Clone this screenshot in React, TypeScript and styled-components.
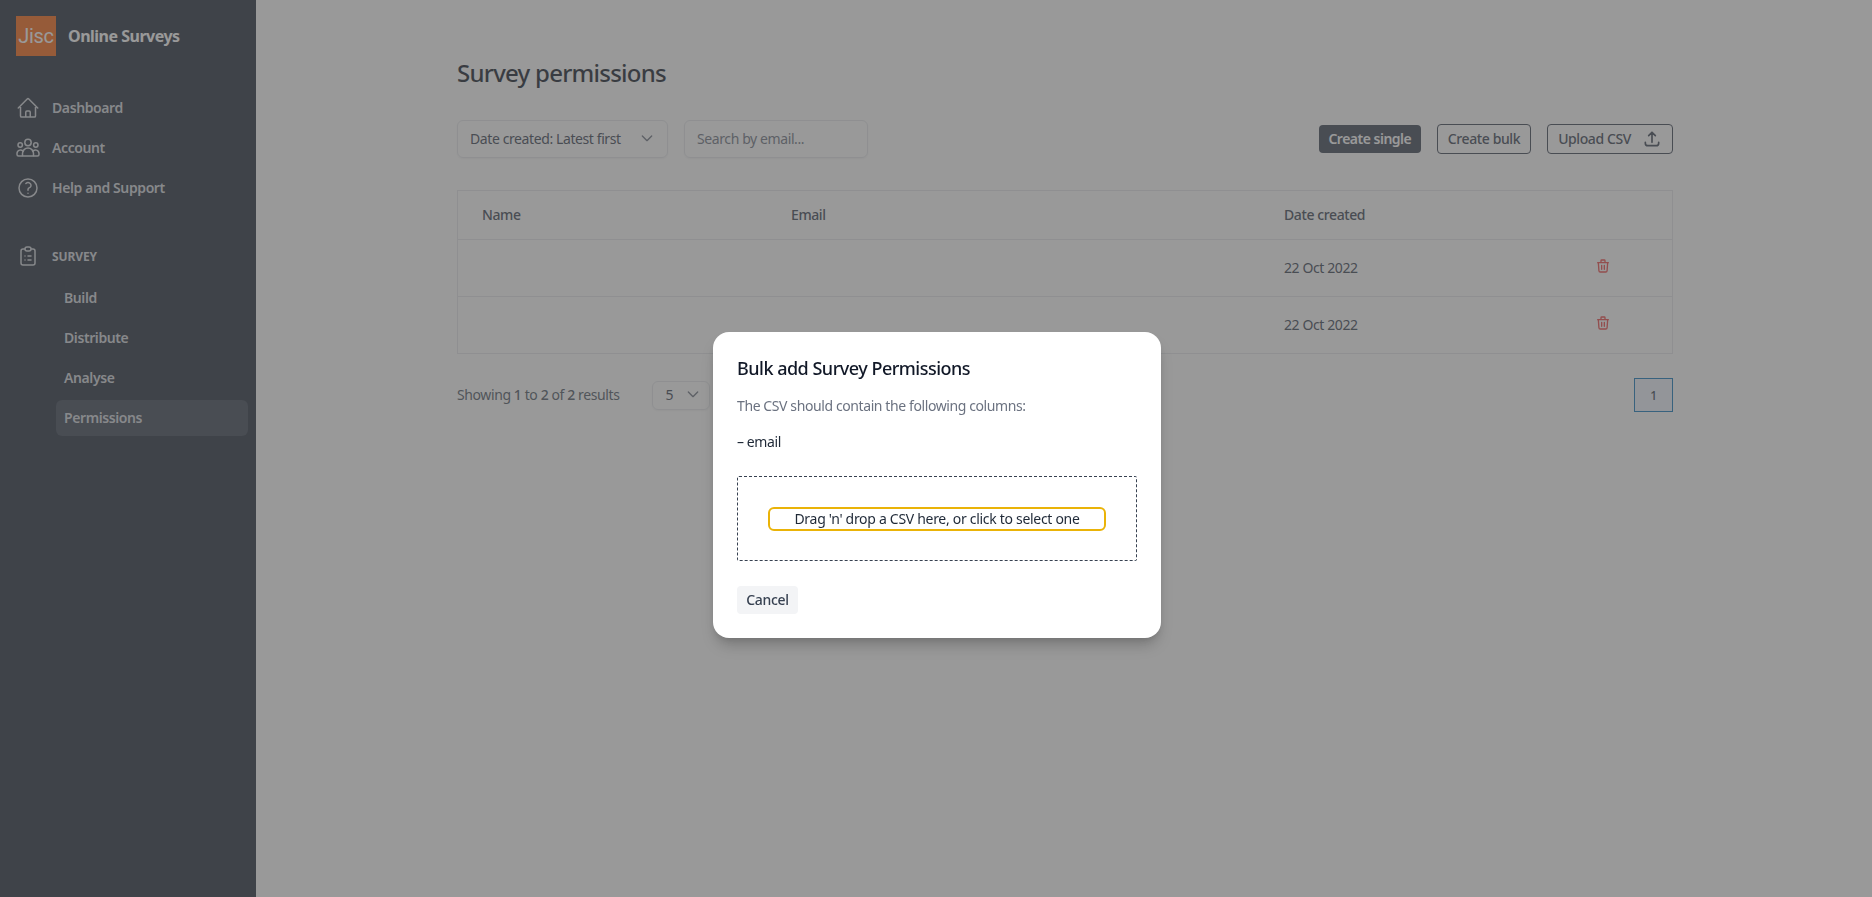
import React from "react";
import styled, { createGlobalStyle } from "styled-components";
import { HiOutlineHome, HiOutlineQuestionMarkCircle } from "react-icons/hi2";
import { HiOutlineClipboardList, HiOutlineTrash, HiOutlineChevronDown, HiOutlineUpload } from "react-icons/hi";

const fontStack = `"Noto Sans", "Open Sans", Arial, sans-serif`;

const GlobalStyle = createGlobalStyle`
    html, body {
        margin: 0;
        padding: 0;
        height: 100%;
        background: #ffffff;
        font-family: ${fontStack};
        font-size: 14px;
        letter-spacing: -0.4px;
    }
    * {
        box-sizing: border-box;
    }
`;

const Page = styled.div`
    display: flex;
    height: 897px;
    overflow: hidden;
`;

const Sidebar = styled.aside`
    width: 256px;
    flex-shrink: 0;
    background: #1f2937;
    padding-top: 16px;
`;

const Brand = styled.div`
    display: flex;
    align-items: center;
    gap: 12px;
    padding-left: 16px;
    margin-bottom: 32px;
`;

const Logo = styled.div`
    width: 40px;
    height: 40px;
    background: #f8640f;
    color: #ffffff;
    font-family: Roboto, sans-serif;
    font-size: 20px;
    letter-spacing: -0.3px;
    display: flex;
    align-items: center;
    justify-content: center;
`;

const BrandName = styled.span`
    color: #ffffff;
    font-size: 16px;
    font-weight: 700;
    letter-spacing: -0.5px;
`;

const NavList = styled.nav`
    display: flex;
    flex-direction: column;
`;

const NavItem = styled.a`
    display: flex;
    align-items: center;
    height: 40px;
    padding-left: 16px;
    gap: 12px;
    color: #d1d5db;
    font-size: 14px;
    font-weight: 600;
    svg {
        width: 24px;
        height: 24px;
        color: #d1d5db;
    }
`;

const NavLabel = styled.span`
    padding-bottom: 2px;
`;

const SectionHead = styled.div`
    display: flex;
    align-items: center;
    gap: 12px;
    height: 40px;
    margin-top: 28px;
    padding-left: 16px;
    color: #d1d5db;
    font-size: 12px;
    font-weight: 700;
    letter-spacing: -0.1px;
    svg {
        width: 24px;
        height: 24px;
        stroke-width: 1.5;
    }
`;

const SubList = styled.div`
    display: flex;
    flex-direction: column;
    gap: 4px;
    margin: 4px 8px 0 56px;
`;

const SubItem = styled.a<{ $active?: boolean }>`
    display: flex;
    align-items: center;
    height: 36px;
    padding: 0 0 2px 8px;
    border-radius: 6px;
    color: #d1d5db;
    font-size: 14px;
    font-weight: 600;
    background: ${(p) => (p.$active ? "#374151" : "transparent")};
`;

const Main = styled.main`
    flex: 1;
    padding: 55px 199px 0 201px;
    color: #1f2937;
`;

const Title = styled.h1`
    margin: 0;
    font-size: 24px;
    line-height: 36px;
    font-weight: 500;
    letter-spacing: -0.75px;
    color: #111827;
`;

const Toolbar = styled.div`
    display: flex;
    align-items: center;
    margin-top: 29px;
    height: 38px;
`;

const SelectBox = styled.div`
    display: flex;
    align-items: center;
    justify-content: space-between;
    width: 211px;
    height: 38px;
    padding: 0 12px 2px 12px;
    border: 1px solid #e5e7eb;
    border-radius: 6px;
    color: #374151;
    font-size: 14px;
    box-shadow: 0 1px 2px rgba(0, 0, 0, 0.05);
    svg {
        width: 16px;
        height: 16px;
        color: #6b7280;
    }
`;

const SearchBox = styled.div`
    display: flex;
    align-items: center;
    width: 184px;
    height: 38px;
    margin-left: 16px;
    padding: 0 0 2px 12px;
    border: 1px solid #e5e7eb;
    border-radius: 6px;
    color: #6b7280;
    font-size: 14px;
    box-shadow: 0 1px 2px rgba(0, 0, 0, 0.05);
`;

const Actions = styled.div`
    display: flex;
    align-items: center;
    gap: 16px;
    margin-left: auto;
`;

const SolidButton = styled.button`
    height: 28px;
    width: 102px;
    padding: 0 0 2px;
    border: none;
    border-radius: 4px;
    background: #374151;
    color: #ffffff;
    font: 600 14px ${fontStack};
    letter-spacing: -0.5px;
`;

const OutlineButton = styled.button`
    display: flex;
    align-items: center;
    justify-content: center;
    gap: 11px;
    height: 30px;
    padding: 0 10px 2px;
    border: 1px solid #374151;
    border-radius: 4px;
    background: #ffffff;
    color: #374151;
    font: 500 14px ${fontStack};
    letter-spacing: -0.4px;
    svg {
        width: 20px;
        height: 20px;
        margin-top: 2px;
    }
`;

const Table = styled.div`
    margin-top: 32px;
    border: 1px solid #e5e7eb;
`;

const TableRow = styled.div<{ $head?: boolean }>`
    display: grid;
    grid-template-columns: 309px 493px 311px 1fr;
    align-items: center;
    height: ${(p) => (p.$head ? "48px" : "57px")};
    padding: 0 0 2px 24px;
    border-top: ${(p) => (p.$head ? "none" : "1px solid #e5e7eb")};
    font-weight: ${(p) => (p.$head ? 500 : 400)};
    color: #374151;
`;

const DeleteIcon = styled(HiOutlineTrash)`
    width: 16px;
    height: 16px;
    margin-top: -2px;
    color: #ef4444;
`;

const Footer = styled.div`
    display: flex;
    align-items: center;
    margin-top: 24px;
    height: 34px;
`;

const ResultText = styled.span`
    color: #4b5563;
    padding-bottom: 2px;
    b {
        font-weight: 500;
    }
`;

const PageSize = styled(SelectBox)`
    width: 58px;
    height: 29px;
    margin-left: 33px;
    padding: 0 8px 2px 12px;
`;

const PageButton = styled.div`
    width: 39px;
    height: 34px;
    margin-left: auto;
    display: flex;
    align-items: center;
    justify-content: center;
    border: 1px solid #0e76bc;
    background: #eff6ff;
    color: #374151;
    font-size: 12px;
    font-weight: 500;
`;

const Overlay = styled.div`
    position: fixed;
    inset: 0;
    display: flex;
    justify-content: center;
    align-items: flex-start;
    padding-top: 332px;
    padding-left: 2px;
    background: rgba(85, 85, 85, 0.6);
`;

const Modal = styled.div`
    width: 448px;
    height: 306px;
    padding: 24px;
    border-radius: 16px;
    background: #ffffff;
    box-shadow: 0 10px 15px -3px rgba(0, 0, 0, 0.2), 0 4px 6px -2px rgba(0, 0, 0, 0.1);
`;

const ModalTitle = styled.h3`
    margin: 0;
    font-size: 18px;
    line-height: 24px;
    font-weight: 500;
    letter-spacing: -0.5px;
    color: #111827;
`;

const ModalText = styled.p`
    margin: 16px 0 0;
    font-size: 14px;
    line-height: 20px;
    color: #6b7280;
`;

const ColumnName = styled.p`
    margin: 16px 0 0;
    font-size: 14px;
    line-height: 20px;
    color: #1f2937;
`;

const DropZone = styled.div`
    display: flex;
    align-items: center;
    justify-content: center;
    height: 85px;
    margin-top: 24px;
    border: 1px dashed #374151;
    border-radius: 2px;
`;

const DropPrompt = styled.div`
    width: 338px;
    height: 24px;
    display: flex;
    align-items: center;
    justify-content: center;
    padding-bottom: 1px;
    border: 2px solid #eab308;
    border-radius: 6px;
    font-size: 14px;
    letter-spacing: -0.3px;
    color: #1f2937;
`;

const CancelButton = styled.button`
    display: block;
    width: 61px;
    height: 28px;
    margin-top: 25px;
    padding: 0 0 2px;
    border: none;
    border-radius: 4px;
    background: #f3f4f6;
    color: #374151;
    font: 500 14px ${fontStack};
    letter-spacing: -0.3px;
`;

function GroupIcon() {
    return (
        <svg viewBox="0 0 24 24" fill="none" stroke="currentColor" strokeWidth={1.5} strokeLinejoin="round">
            <circle cx="12" cy="6.5" r="3.2" />
            <circle cx="4.2" cy="9" r="2.2" />
            <circle cx="19.8" cy="9" r="2.2" />
            <path d="M6.5 20v-2.5a5.5 5.5 0 0 1 11 0V20z" />
            <path d="M6.5 20H2.5A1.5 1.5 0 0 1 1 18.5v-1a3.5 3.5 0 0 1 6.6-1.6" />
            <path d="M17.5 20h4a1.5 1.5 0 0 0 1.5-1.5v-1a3.5 3.5 0 0 0-6.6-1.6" />
        </svg>
    );
}

export default function App() {
    return (
        <Page>
            <GlobalStyle />
            <Sidebar>
                <Brand>
                    <Logo>Jisc</Logo>
                    <BrandName>Online Surveys</BrandName>
                </Brand>
                <NavList>
                    <NavItem>
                        <HiOutlineHome />
                        <NavLabel>Dashboard</NavLabel>
                    </NavItem>
                    <NavItem>
                        <GroupIcon />
                        <NavLabel>Account</NavLabel>
                    </NavItem>
                    <NavItem>
                        <HiOutlineQuestionMarkCircle />
                        <NavLabel>Help and Support</NavLabel>
                    </NavItem>
                </NavList>
                <SectionHead>
                    <HiOutlineClipboardList />
                    SURVEY
                </SectionHead>
                <SubList>
                    <SubItem>Build</SubItem>
                    <SubItem>Distribute</SubItem>
                    <SubItem>Analyse</SubItem>
                    <SubItem $active>Permissions</SubItem>
                </SubList>
            </Sidebar>
            <Main>
                <Title>Survey permissions</Title>
                <Toolbar>
                    <SelectBox>
                        Date created: Latest first
                        <HiOutlineChevronDown />
                    </SelectBox>
                    <SearchBox>Search by email...</SearchBox>
                    <Actions>
                        <SolidButton>Create single</SolidButton>
                        <OutlineButton>Create bulk</OutlineButton>
                        <OutlineButton>
                            Upload CSV
                            <HiOutlineUpload />
                        </OutlineButton>
                    </Actions>
                </Toolbar>
                <Table>
                    <TableRow $head>
                        <span>Name</span>
                        <span>Email</span>
                        <span>Date created</span>
                    </TableRow>
                    <TableRow>
                        <span />
                        <span />
                        <span>22 Oct 2022</span>
                        <DeleteIcon />
                    </TableRow>
                    <TableRow>
                        <span />
                        <span />
                        <span>22 Oct 2022</span>
                        <DeleteIcon />
                    </TableRow>
                </Table>
                <Footer>
                    <ResultText>
                        Showing <b>1</b> to <b>2</b> of <b>2</b> results
                    </ResultText>
                    <PageSize>
                        5
                        <HiOutlineChevronDown />
                    </PageSize>
                    <PageButton>1</PageButton>
                </Footer>
            </Main>
            <Overlay>
                <Modal>
                    <ModalTitle>Bulk add Survey Permissions</ModalTitle>
                    <ModalText>The CSV should contain the following columns:</ModalText>
                    <ColumnName>– email</ColumnName>
                    <DropZone>
                        <DropPrompt>Drag 'n' drop a CSV here, or click to select one</DropPrompt>
                    </DropZone>
                    <CancelButton>Cancel</CancelButton>
                </Modal>
            </Overlay>
        </Page>
    );
}
